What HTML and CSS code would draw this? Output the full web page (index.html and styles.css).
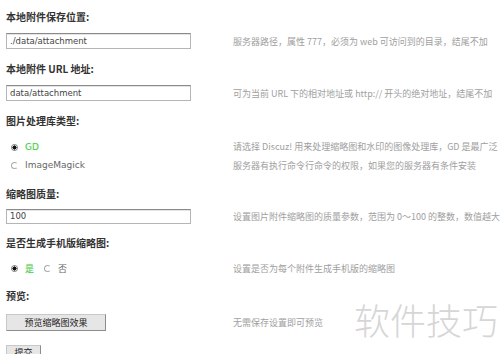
FILE: index.html
```html
<!DOCTYPE html>
<html lang="zh-CN">
<head>
    <meta charset="UTF-8">
    <title>附件设置</title>
    <link rel="stylesheet" href="styles.css">
</head>
<body>
    <div class="settings">
        <div class="label">本地附件保存位置:</div>
        <div class="value">
            <div class="field"><input type="text" class="text-input" value="./data/attachment"></div>
            <div class="desc">服务器路径，属性 777，必须为 web 可访问到的目录，结尾不加</div>
        </div>

        <div class="label">本地附件 URL 地址:</div>
        <div class="value">
            <div class="field"><input type="text" class="text-input" value="data/attachment"></div>
            <div class="desc">可为当前 URL 下的相对地址或 http:// 开头的绝对地址，结尾不加</div>
        </div>

        <div class="label">图片处理库类型:</div>
        <div class="value value-radios">
            <div class="field">
                <label class="radio-line"><span class="radio checked"></span><span class="on">GD</span></label>
                <label class="radio-line"><span class="radio"></span><span>ImageMagick</span></label>
            </div>
            <div class="desc desc-two">请选择 Discuz! 用来处理缩略图和水印的图像处理库，GD 是最广泛<br>服务器有执行命令行命令的权限，如果您的服务器有条件安装</div>
        </div>

        <div class="label">缩略图质量:</div>
        <div class="value value-short">
            <div class="field"><input type="text" class="text-input" value="100"></div>
            <div class="desc">设置图片附件缩略图的质量参数，范围为 0～100 的整数，数值越大</div>
        </div>

        <div class="label">是否生成手机版缩略图:</div>
        <div class="value value-inline">
            <div class="field">
                <label class="radio-line"><span class="radio checked"></span><span class="on">是</span></label>
                <label class="radio-line"><span class="radio"></span><span>否</span></label>
            </div>
            <div class="desc">设置是否为每个附件生成手机版的缩略图</div>
        </div>

        <div class="label">预览:</div>
        <div class="value value-button">
            <div class="field"><button class="btn btn-wide">预览缩略图效果</button></div>
            <div class="desc">无需保存设置即可预览</div>
        </div>

        <div class="submit-row"><button class="btn">提交</button></div>
    </div>

    <div class="watermark">软件技巧</div>
</body>
</html>
```

FILE: styles.css
```css
body {
    margin: 0;
    background-color: #fff;
    font-family: "DejaVu Sans", "Noto Sans CJK SC", sans-serif;
    font-size: 9px;
    color: #333;
    overflow: hidden;
}

.settings {
    padding: 7px 0 0 6px;
}

.label {
    height: 20px;
    line-height: 20px;
    font-family: "Noto Sans CJK SC", sans-serif;
    font-size: 10px;
    font-weight: bold;
    color: #333;
}

.value {
    display: flex;
    align-items: center;
    height: 32px;
    padding-top: 6px;
    padding-bottom: 10px;
    box-sizing: border-box;
}

.value-radios {
    height: 53px;
    padding-top: 7px;
    align-items: flex-start;
}

.value-short {
    height: 29px;
    padding-top: 5px;
}

.value-inline {
    height: 33px;
    padding-top: 6px;
    padding-bottom: 9px;
}

.value-button {
    height: 39px;
    padding-top: 8px;
    padding-bottom: 14px;
}

.field {
    display: flex;
    flex-direction: column;
    width: 227px;
    flex-shrink: 0;
}

.value-inline .field {
    flex-direction: row;
    gap: 5px;
}

.text-input {
    display: block;
    width: 185px;
    height: 16px;
    box-sizing: border-box;
    padding: 0 3px;
    border: 1px solid #b5b5b5;
    border-top-color: #8a8a8a;
    box-shadow: inset 0 1px 0 #e4e4e4;
    font-family: "DejaVu Sans", sans-serif;
    font-size: 8.5px;
    color: #444;
    outline: none;
}

.value-short .text-input {
    height: 15px;
}

.desc {
    white-space: nowrap;
    font-family: "Noto Sans CJK SC", sans-serif;
    font-size: 9px;
    color: #a0a0a0;
}

.desc-two {
    line-height: 19px;
    margin-top: -1px;
}

.radio-line {
    display: flex;
    align-items: center;
    height: 18px;
    padding-left: 5px;
    gap: 7px;
    font-family: "DejaVu Sans", "Noto Sans CJK SC", sans-serif;
    font-size: 9px;
    color: #666;
}

.radio {
    width: 5px;
    height: 5px;
    border: 1px solid #aaa;
    border-radius: 50%;
    border-right-color: #fff;
}

.radio.checked {
    border-color: #777;
    background: radial-gradient(circle, #111 55%, #fff 60%);
}

.on {
    color: #4cc84c;
    text-shadow: 0 0 2px #c8f5c8;
}

.btn {
    display: block;
    height: 17px;
    padding: 0 6px;
    background-color: #e6e6e6;
    border: 1px solid #c8c8c8;
    border-right-color: #8c8c8c;
    border-bottom-color: #8c8c8c;
    font-family: "Noto Sans CJK SC", sans-serif;
    font-size: 9px;
    color: #222;
}

.btn-wide {
    width: 100px;
}

.submit-row {
    display: flex;
}

.submit-row .btn {
    width: 35px;
    height: 18px;
    padding: 0 0 5px;
}

.watermark {
    position: absolute;
    left: 354px;
    top: 293px;
    font-family: "Noto Sans CJK SC", sans-serif;
    font-weight: 300;
    font-size: 36px;
    color: #d6d6d6;
}
```
